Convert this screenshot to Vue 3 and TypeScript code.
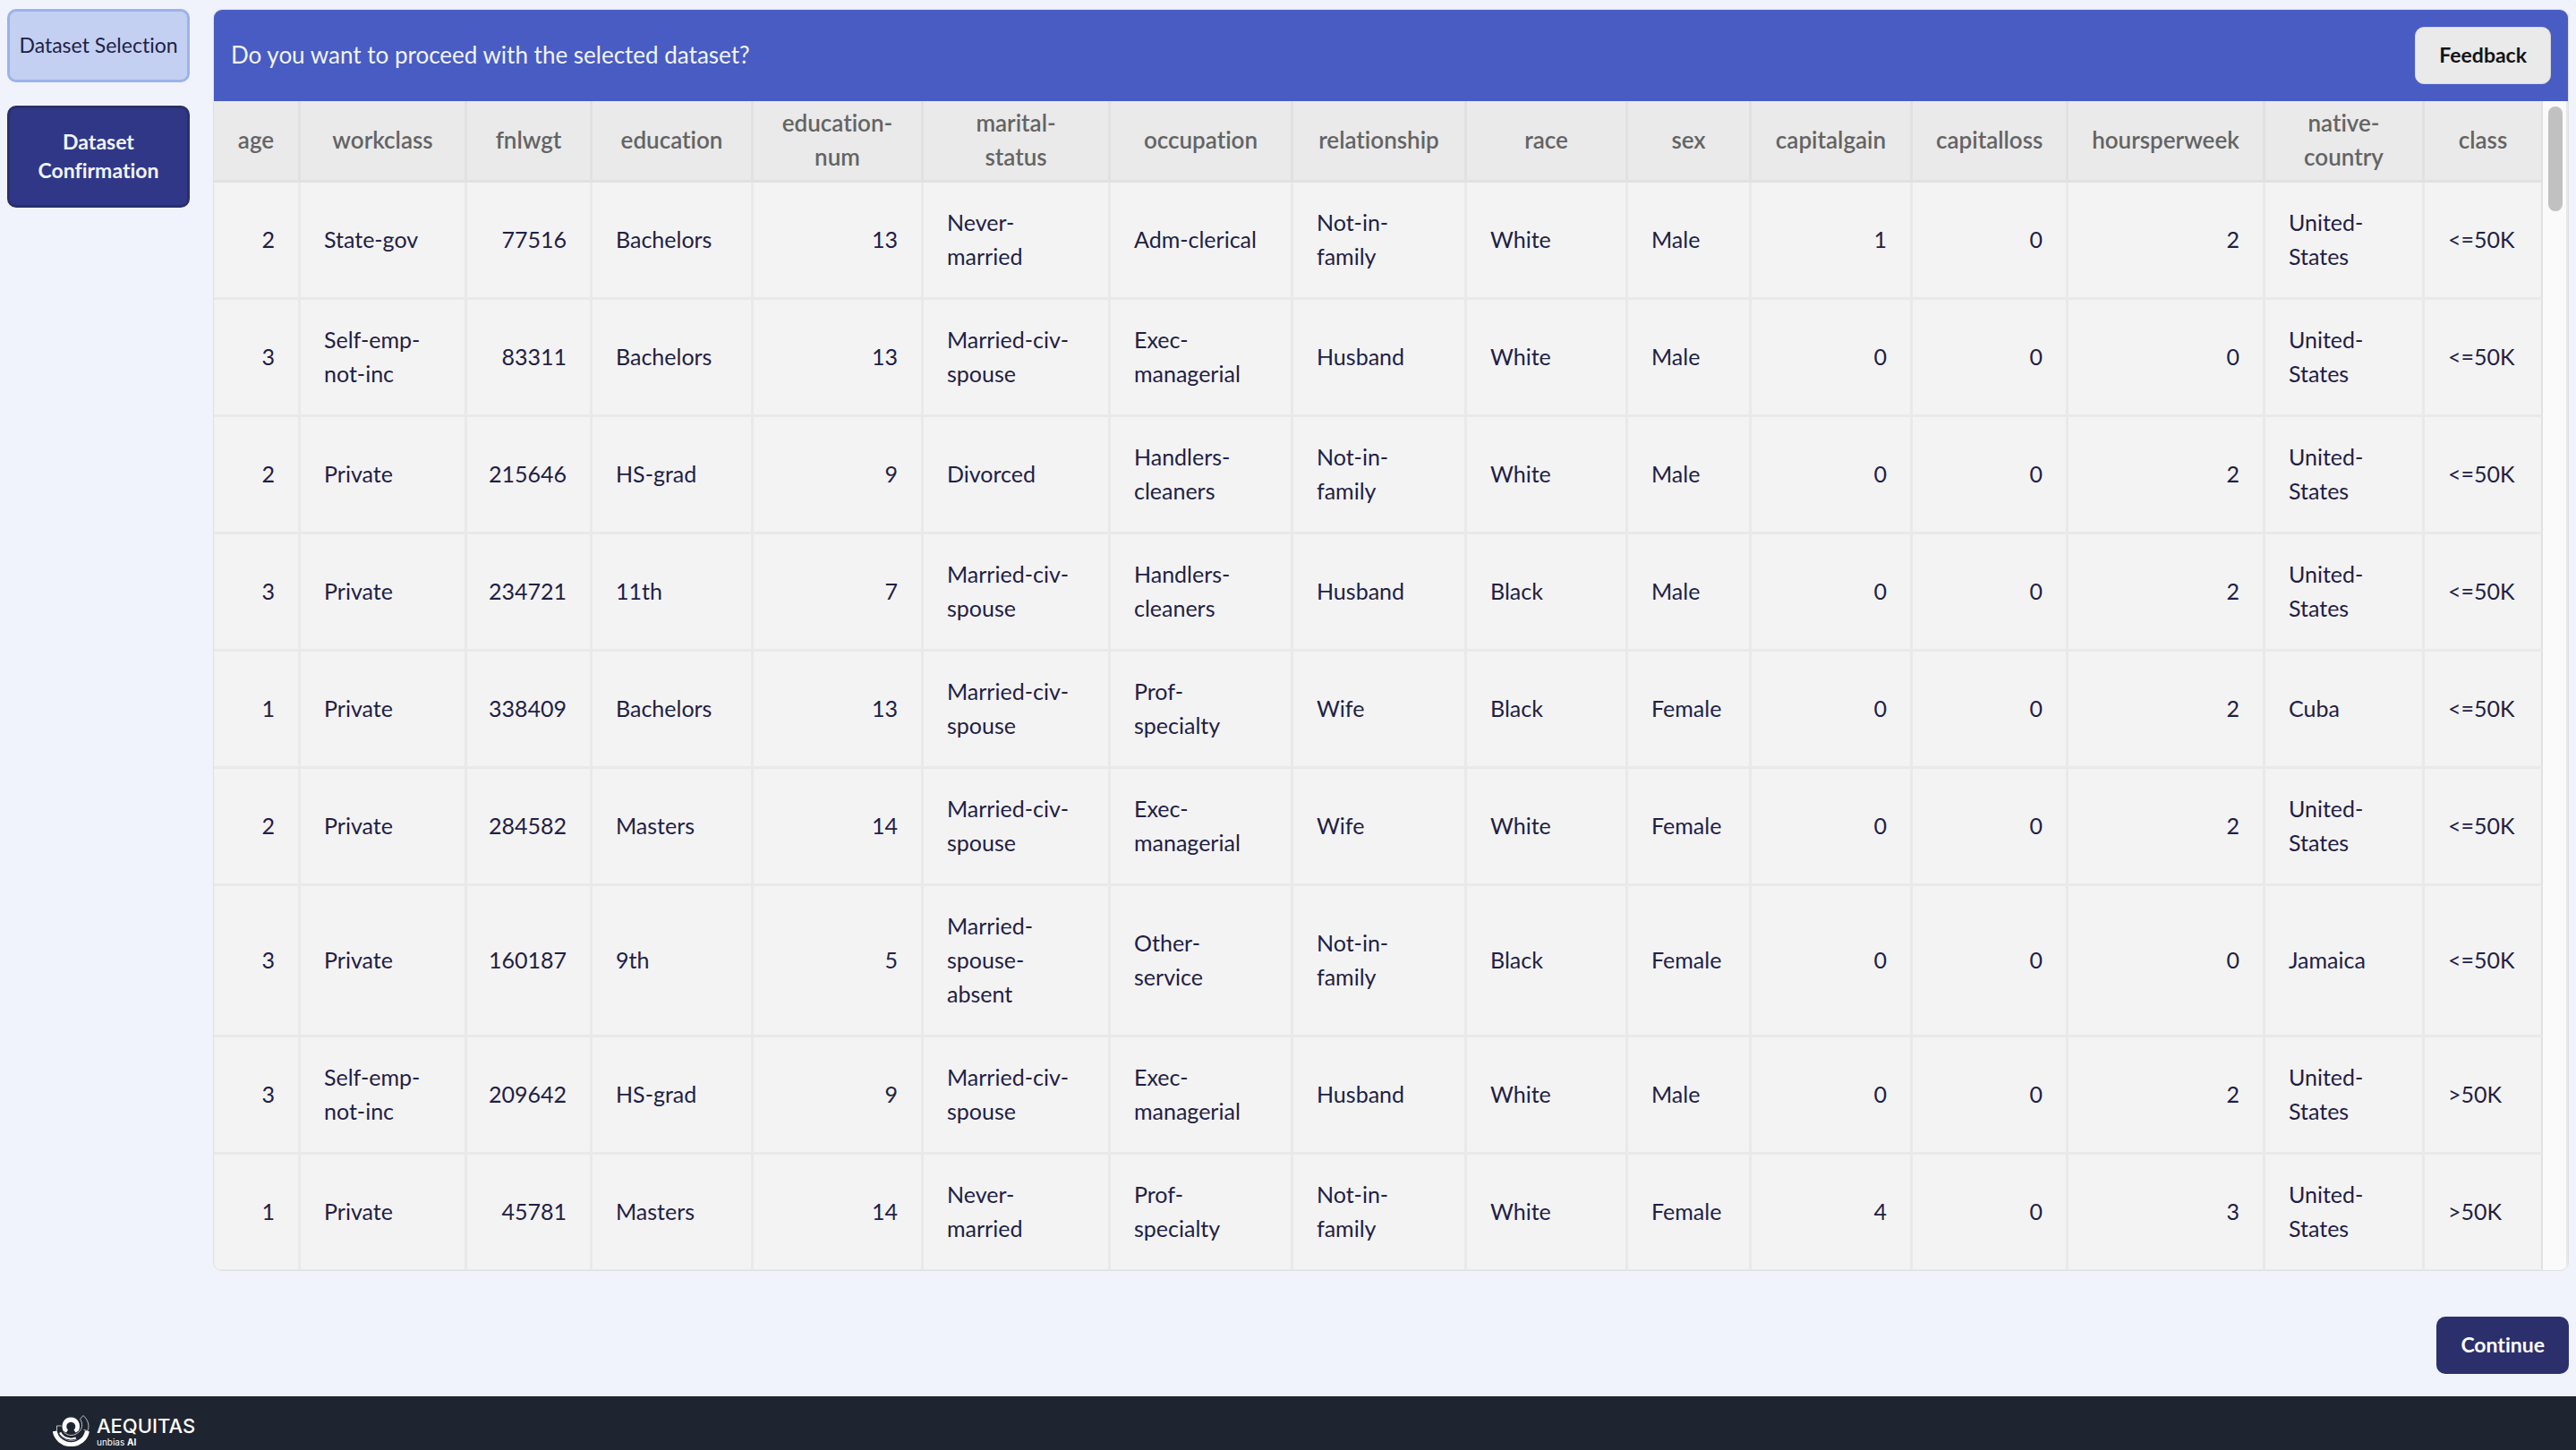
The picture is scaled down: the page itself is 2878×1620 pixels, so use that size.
<script setup lang="ts">
interface Column {
  key: string
  width: number
  numeric?: boolean
}

const columns: Column[] = [
  { key: 'age', width: 97, numeric: true },
  { key: 'workclass', width: 186 },
  { key: 'fnlwgt', width: 140, numeric: true },
  { key: 'education', width: 180 },
  { key: 'education-num', width: 190, numeric: true },
  { key: 'marital-status', width: 209 },
  { key: 'occupation', width: 204 },
  { key: 'relationship', width: 194 },
  { key: 'race', width: 180 },
  { key: 'sex', width: 138 },
  { key: 'capitalgain', width: 180, numeric: true },
  { key: 'capitalloss', width: 174, numeric: true },
  { key: 'hoursperweek', width: 220, numeric: true },
  { key: 'native-country', width: 178 },
  { key: 'class', width: 132 },
]

const totalWidth = columns.reduce((sum, c) => sum + c.width, 0)

const rows: (string | number)[][] = [
  [2, 'State-gov', 77516, 'Bachelors', 13, 'Never-married', 'Adm-clerical', 'Not-in-family', 'White', 'Male', 1, 0, 2, 'United-States', '<=50K'],
  [3, 'Self-emp-not-inc', 83311, 'Bachelors', 13, 'Married-civ-spouse', 'Exec-managerial', 'Husband', 'White', 'Male', 0, 0, 0, 'United-States', '<=50K'],
  [2, 'Private', 215646, 'HS-grad', 9, 'Divorced', 'Handlers-cleaners', 'Not-in-family', 'White', 'Male', 0, 0, 2, 'United-States', '<=50K'],
  [3, 'Private', 234721, '11th', 7, 'Married-civ-spouse', 'Handlers-cleaners', 'Husband', 'Black', 'Male', 0, 0, 2, 'United-States', '<=50K'],
  [1, 'Private', 338409, 'Bachelors', 13, 'Married-civ-spouse', 'Prof-specialty', 'Wife', 'Black', 'Female', 0, 0, 2, 'Cuba', '<=50K'],
  [2, 'Private', 284582, 'Masters', 14, 'Married-civ-spouse', 'Exec-managerial', 'Wife', 'White', 'Female', 0, 0, 2, 'United-States', '<=50K'],
  [3, 'Private', 160187, '9th', 5, 'Married-spouse-absent', 'Other-service', 'Not-in-family', 'Black', 'Female', 0, 0, 0, 'Jamaica', '<=50K'],
  [3, 'Self-emp-not-inc', 209642, 'HS-grad', 9, 'Married-civ-spouse', 'Exec-managerial', 'Husband', 'White', 'Male', 0, 0, 2, 'United-States', '>50K'],
  [1, 'Private', 45781, 'Masters', 14, 'Never-married', 'Prof-specialty', 'Not-in-family', 'White', 'Female', 4, 0, 3, 'United-States', '>50K'],
]
</script>

<template>
  <div class="page">
    <div class="body">
      <nav class="steps">
        <button type="button" class="step done">Dataset Selection</button>
        <button type="button" class="step current">Dataset Confirmation</button>
      </nav>
      <main class="main">
        <section class="card">
          <header class="bar">
            <span class="question">Do you want to proceed with the selected dataset?</span>
            <button type="button" class="btn feedback">Feedback</button>
          </header>
          <div class="viewport">
            <table class="data">
              <colgroup>
                <col v-for="c in columns" :key="c.key" :style="{ width: (c.width / totalWidth) * 100 + '%' }" />
              </colgroup>
              <thead>
                <tr>
                  <th v-for="c in columns" :key="c.key" scope="col">{{ c.key }}</th>
                </tr>
              </thead>
              <tbody>
                <tr v-for="(row, r) in rows" :key="r">
                  <td v-for="(value, i) in row" :key="i" :class="{ numeric: columns[i].numeric }">{{ value }}</td>
                </tr>
              </tbody>
            </table>
            <div class="track"><div class="thumb"></div></div>
          </div>
        </section>
        <div class="actions">
          <button type="button" class="btn continue">Continue</button>
        </div>
      </main>
    </div>
    <footer class="footer">
      <svg class="mark" viewBox="0 0 42 36" fill="none" stroke="#fff" aria-hidden="true">
        <path d="M11.500 18.500C8.500 11 12.500 3.500 20.300 3.500S32 11 29 18.500L25.500 20.500L23.500 17.500A5 5 0 1 0 17 17.500L15 20.500Z" fill="#fff" stroke="none" />
        <path d="M2.200 18.800A18.300 17.500 0 0 0 38.400 18.800" stroke-width="5" />
        <path d="M8 20.500A13.300 12 0 0 0 26 27" stroke-width="3" />
        <path d="M5.500 18.500A15.500 14.500 0 0 0 35 19.500" stroke="#1f2530" stroke-width="1" />
        <g stroke-width="1" stroke-opacity="0.7">
          <path d="M9.500 13H4.500V18.500" />
          <path d="M12 19.500C16.500 25 25 25 30.500 18.500C33.500 14 33 9 30.500 5.500L34 1.500C40 7 41 13 39 18.500L34.500 17.500" />
        </g>
      </svg>
      <div class="brand">
        <span class="name">AEQUITAS</span>
        <span class="tag">unbias <b>AI</b></span>
      </div>
    </footer>
  </div>
</template>

<style>
body {
  background: #f0f3fc;
}
</style>

<style scoped>
.page {
  display: flex;
  flex-direction: column;
  min-height: 100vh;
  background: #f0f3fc;
  font-family: Lato, "Liberation Sans", sans-serif;
  font-variant-ligatures: none;
  color: #1f2145;
}
.body {
  flex: 1;
  display: flex;
  align-items: flex-start;
  gap: 26px;
  padding: 10px 8px 25px;
}
.steps {
  flex: none;
  width: 204px;
  display: flex;
  flex-direction: column;
  gap: 26px;
}
.step {
  box-sizing: border-box;
  width: 100%;
  padding: 21px 8px 23px;
  border: 3px solid #9cb2ea;
  border-radius: 10px;
  background: #c3d0f2;
  color: #1f2145;
  font: 400 23px/32px Lato, "Liberation Sans", sans-serif;
  font-variant-ligatures: none;
}
.step.current {
  border-color: #293069;
  background: #303787;
  color: #f0f3fc;
  font-weight: 700;
}
.main {
  flex: 1;
  min-width: 0;
}
.card {
  border: 1px solid #dfdfe0;
  border-radius: 10px;
  overflow: hidden;
}
.bar {
  display: flex;
  align-items: center;
  justify-content: space-between;
  padding: 19px;
  background: #485cc3;
}
.question {
  padding-bottom: 2px;
  color: #f0f3fc;
  font-size: 26px;
  line-height: 38px;
}
.btn {
  border: 1px solid transparent;
  border-radius: 10px;
  padding: 14px 26px 16px;
  font: 700 23px/32px Lato, "Liberation Sans", sans-serif;
  font-variant-ligatures: none;
}
.feedback {
  background: #eaeaea;
  border-color: #d8d8d8;
  color: #141414;
}
.continue {
  background: #2b306c;
  color: #fff;
}
.viewport {
  display: flex;
}
.data {
  flex: 1;
  width: 100%;
  min-width: 0;
  table-layout: fixed;
  border-collapse: separate;
  border-spacing: 0;
  font-size: 25px;
  line-height: 38px;
}
th,
td {
  border-right: 3px solid #e9e9e9;
  border-bottom: 3px solid #e9e9e9;
}
th {
  padding: 5px 26px 7px;
  border-color: #e1e1e1;
  background: #eaeaea;
  color: #646464;
  font-size: 26px;
  font-weight: 600;
  text-align: center;
}
td {
  padding: 25px 26px 27px;
  background: #f3f3f3;
  text-align: left;
}
td.numeric {
  padding-left: 16px;
  text-align: right;
}
th:last-child,
td:last-child {
  border-right: 2px solid #e1e1e1;
}
tbody tr:last-child td {
  border-bottom-width: 1px;
}
.track {
  flex: none;
  width: 16px;
  padding: 6px 4px 6px 6px;
  border-right: 2px solid #e8e8e8;
  background: #fafafa;
}
.thumb {
  height: 117px;
  border-radius: 8px;
  background: #c1c1c1;
}
.actions {
  display: flex;
  justify-content: flex-end;
  padding-top: 51px;
}
.footer {
  display: flex;
  align-items: flex-start;
  gap: 7px;
  box-sizing: border-box;
  height: 60px;
  padding: 20px 59px 0;
  background: #1f2530;
  color: #fff;
}
.mark {
  width: 42px;
  height: 36px;
}
.brand {
  display: flex;
  flex-direction: column;
  padding-top: 2px;
  font-family: Inter, sans-serif;
}
.name {
  font-size: 22px;
  line-height: 23px;
  font-weight: 500;
}
.tag {
  font-size: 10px;
  line-height: 12px;
}
</style>
